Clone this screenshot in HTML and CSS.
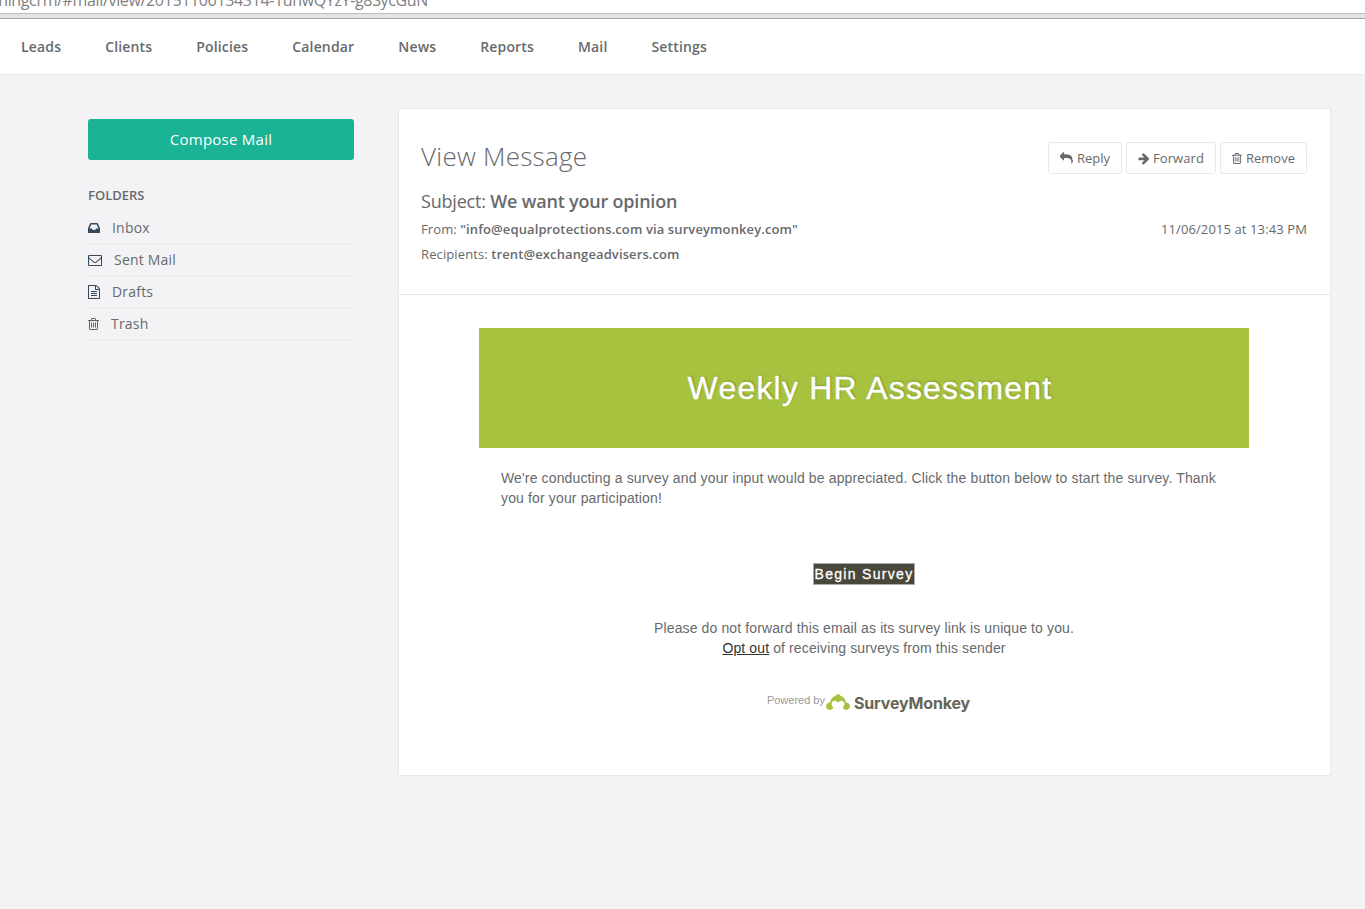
FILE: index.html
```html
<!DOCTYPE html>
<html lang="en">
<head>
<meta charset="utf-8">
<title>View Message</title>
<link rel="stylesheet" href="styles.css">
</head>
<body>
<svg class="sprite" width="0" height="0" aria-hidden="true">
  <symbol id="i-inbox" viewBox="128 0 1536 1792"><path d="M1151 960h316q-1-3-2.500-8t-2.500-8l-212-496h-708l-212 496q-1 2-2.500 8t-2.500 8h316l95 192h320zm513 30v482q0 26-19 45t-45 19h-1408q-26 0-45-19t-19-45v-482q0-62 25-123l238-552q10-25 36.500-42t52.500-17h832q26 0 52.500 17t36.500 42l238 552q25 61 25 123z"/></symbol>
  <symbol id="i-envelope" viewBox="0 0 1792 1792"><path d="M1664 1504v-768q-32 36-69 66-268 206-426 338-51 43-83 67t-86.500 48.500-102.500 24.500h-2q-48 0-102.500-24.500t-86.500-48.500-83-67q-158-132-426-338-37-30-69-66v768q0 13 9.500 22.500t22.500 9.500h1472q13 0 22.500-9.500t9.500-22.500zm0-1051v-24.500l-.5-13-3-12.500-5.500-9-9-7.500-14-2.500h-1472q-13 0-22.500 9.500t-9.500 22.500q0 168 147 284 193 152 401 317 6 5 35 29.500t46 37.500 44.500 31.500 50.500 27.500 43 9h2q20 0 43-9t50.500-27.500 44.500-31.500 46-37.500 35-29.500q208-165 401-317 54-43 100.500-115.500t46.500-131.500zm128-37v1088q0 66-47 113t-113 47h-1472q-66 0-113-47t-47-113v-1088q0-66 47-113t113-47h1472q66 0 113 47t47 113z"/></symbol>
  <symbol id="i-file" viewBox="128 0 1536 1792"><path d="M1596 380q28 28 48 76t20 88v1152q0 40-28 68t-68 28h-1344q-40 0-68-28t-28-68v-1600q0-40 28-68t68-28h896q40 0 88 20t76 48zm-444-244v376h376q-10-29-22-41l-313-313q-12-12-41-22zm384 1528v-1024h-416q-40 0-68-28t-28-68v-416h-768v1536h1280zm-1024-864q0-14 9-23t23-9h704q14 0 23 9t9 23v64q0 14-9 23t-23 9h-704q-14 0-23-9t-9-23v-64zm736 224q14 0 23 9t9 23v64q0 14-9 23t-23 9h-704q-14 0-23-9t-9-23v-64q0-14 9-23t23-9h704zm0 256q14 0 23 9t9 23v64q0 14-9 23t-23 9h-704q-14 0-23-9t-9-23v-64q0-14 9-23t23-9h704z"/></symbol>
  <symbol id="i-trash" viewBox="192 0 1408 1792"><path d="M704 736v576q0 14-9 23t-23 9h-64q-14 0-23-9t-9-23v-576q0-14 9-23t23-9h64q14 0 23 9t9 23zm256 0v576q0 14-9 23t-23 9h-64q-14 0-23-9t-9-23v-576q0-14 9-23t23-9h64q14 0 23 9t9 23zm256 0v576q0 14-9 23t-23 9h-64q-14 0-23-9t-9-23v-576q0-14 9-23t23-9h64q14 0 23 9t9 23zm128 724v-948h-896v948q0 22 7 40.500t14.500 27 10.500 8.500h832q3 0 10.500-8.500t14.500-27 7-40.500zm-672-1076h448l-48-117q-7-9-17-11h-317q-10 2-17 11zm928 32v64q0 14-9 23t-23 9h-96v948q0 83-47 143.500t-113 60.500h-832q-66 0-113-58.500t-47-141.500v-952h-96q-14 0-23-9t-9-23v-64q0-14 9-23t23-9h309l70-167q15-37 54-63t79-26h320q40 0 79 26t54 63l70 167h309q14 0 23 9t9 23z"/></symbol>
  <symbol id="i-reply" viewBox="0 0 1792 1792"><path d="M1792 1120q0 166-127 451-3 7-10.500 24t-13.500 30-13 22q-12 17-28 17-15 0-23.500-10t-8.500-25q0-9 2.500-26.500t2.500-23.500q5-68 5-123 0-112-19.500-200.500t-54-153.500-89-112-119.500-78.500-148-46.500-171-23-194.500-7h-224v256q0 26-19 45t-45 19-45-19l-512-512q-19-19-19-45t19-45l512-512q19-19 45-19t45 19 19 45v256h224q713 0 875 403 53 134 53 333z"/></symbol>
  <symbol id="i-arrow" viewBox="128 0 1536 1792"><path d="M1600 960q0 54-37 91l-651 651q-39 37-91 37-51 0-90-37l-75-75q-38-38-38-91t38-91l293-293h-704q-52 0-84.500-37.500t-32.500-90.500v-128q0-53 32.500-90.500t84.500-37.500h704l-293-294q-38-36-38-90t38-90l75-75q38-38 90-38 53 0 91 38l651 651q37 35 37 90z"/></symbol>
</svg>

<div class="addressbar"><span class="url">ningcrm/#mail/view/20151106134314-1uhwQYzY-g8SycGuN</span></div>
<div class="chrome-edge"></div>

<nav class="topnav">
  <a>Leads</a><a>Clients</a><a>Policies</a><a>Calendar</a><a>News</a><a>Reports</a><a>Mail</a><a>Settings</a>
</nav>

<div class="page">
  <aside class="sidebar">
    <button class="compose">Compose Mail</button>
    <h5 class="folders-title">FOLDERS</h5>
    <ul class="folders">
      <li><svg class="w12"><use href="#i-inbox"/></svg>Inbox</li>
      <li><svg class="w14"><use href="#i-envelope"/></svg>Sent Mail</li>
      <li><svg class="w12"><use href="#i-file"/></svg>Drafts</li>
      <li><svg class="w11 trash"><use href="#i-trash"/></svg>Trash</li>
    </ul>
  </aside>

  <main class="card">
    <header class="mail-head">
      <div class="title-row">
        <h2>View Message</h2>
        <div class="actions">
          <button class="btn reply"><svg><use href="#i-reply"/></svg>Reply</button>
          <button class="btn forward"><svg><use href="#i-arrow"/></svg>Forward</button>
          <button class="btn remove"><svg><use href="#i-trash"/></svg>Remove</button>
        </div>
      </div>
      <h3>Subject: <b>We want your opinion</b></h3>
      <div class="meta"><span>From: <b>"info@equalprotections.com via surveymonkey.com"</b></span><span>11/06/2015 at 13:43 PM</span></div>
      <div class="meta"><span>Recipients: <b>trent@exchangeadvisers.com</b></span></div>
    </header>

    <section class="mail-body">
      <div class="banner">Weekly HR Assessment</div>
      <p class="intro">We're conducting a survey and your input would be appreciated. Click the button below to start the survey. Thank you for your participation!</p>
      <a class="begin">Begin Survey</a>
      <p class="notice">Please do not forward this email as its survey link is unique to you.<br><a>Opt out</a> of receiving surveys from this sender</p>
      <div class="powered">
        <span class="by">Powered by</span>
        <svg class="monkey" viewBox="0 0 24 18"><path d="M4 9.500C4.600 6 6.900 3.300 10 2.700L9.600 1.600L11.200 2L12.200.6L13 1.600L14.600 1.400L14 2.700C17.100 3.300 19.400 6 20 9.500C22.300 9.600 24 11.300 24 13.300C24 15.400 22.400 16.900 20.400 16.900C18.700 16.900 17.300 15.900 16.800 14.400C18.200 12.800 18.700 11.200 18.200 9.700C17.600 8 15.800 7.300 14.200 7.900C13.200 8.200 12.500 8.900 12 9.800C11.500 8.900 10.800 8.200 9.800 7.900C8.200 7.300 6.400 8 5.800 9.700C5.300 11.200 5.800 12.800 7.200 14.400C6.700 15.900 5.300 16.900 3.600 16.900C1.600 16.900 0 15.400 0 13.300C0 11.300 1.700 9.600 4 9.500Z"/></svg>
        <span class="brand">SurveyMonkey</span>
      </div>
    </section>
  </main>
</div>
</body>
</html>
```
FILE: styles.css
```css
* { box-sizing: border-box; }
body {
  margin: 0;
  height: 909px;
  overflow: hidden;
  background: #f3f3f5;
  color: #676a6c;
  font-family: "Open Sans", "Noto Sans", sans-serif;
  font-size: 13px;
}
h2, h3, h5, p, ul { margin: 0; padding: 0; }
button { font-family: inherit; margin: 0; }
svg { display: block; fill: currentColor; flex: none; }
.sprite { position: absolute; }
b { font-weight: 600; }

.addressbar {
  display: flex;
  align-items: flex-end;
  justify-content: flex-end;
  height: 13px;
  width: 100%;
  padding: 0 937px 1px 0;
  background: #fff;
  overflow: hidden;
}
.url {
  font-size: 16px;
  line-height: 24px;
  letter-spacing: -0.35px;
  white-space: nowrap;
  color: #808080;
}
.chrome-edge {
  height: 6px;
  background: #e4e4e4;
  border-top: 1px solid #bdbdbd;
  border-bottom: 1px solid #a5a5a5;
}
.topnav {
  display: flex;
  gap: 44px;
  height: 56px;
  padding-left: 21px;
  background: #fff;
  border-bottom: 1px solid #e7eaec;
  font-size: 14px;
  font-weight: 600;
  line-height: 56px;
  letter-spacing: 0.16px;
}

.page {
  display: flex;
  align-items: flex-start;
  gap: 44px;
  padding: 33px 34px 0 88px;
}
.sidebar { width: 266px; padding-top: 11px; }
.compose {
  display: block;
  width: 266px;
  height: 41px;
  border: 0;
  padding: 0 0 2px;
  border-radius: 3px;
  background: #1ab394;
  color: #fff;
  font-size: 15px;
  letter-spacing: 0.25px;
}
.folders-title {
  margin-top: 26px;
  font-size: 13px;
  font-weight: 600;
  line-height: 18px;
}
.folders { margin-top: 8px; list-style: none; }
.folders li {
  display: flex;
  align-items: center;
  gap: 12px;
  height: 32px;
  border-bottom: 1px solid #e7eaec;
  font-size: 14px;
  letter-spacing: 0.2px;
}
.folders svg { height: 14px; color: #34495e; }
.w11 { width: 11px; }
.w12 { width: 12px; }
.w14 { width: 14px; }
.folders .trash { color: #6b625c; }

.card {
  width: 933px;
  height: 668px;
  background: #fff;
  border: 1px solid #e7eaec;
}
.mail-head {
  height: 186px;
  padding: 33px 23px 0 22px;
  border-bottom: 1px solid #e7eaec;
}
.title-row { display: flex; justify-content: space-between; height: 47px; }
h2 { font-size: 26px; font-weight: 300; line-height: 28px; letter-spacing: 0.25px; }
.actions { display: flex; gap: 4px; }
.btn {
  display: flex;
  align-items: center;
  justify-content: center;
  gap: 4px;
  height: 32px;
  padding: 0;
  border: 1px solid #e7eaec;
  border-radius: 3px;
  background: #fff;
  color: #676a6c;
  font-size: 13px;
}
.btn svg { height: 13px; width: 12px; }
.reply { width: 74px; }
.reply svg { width: 13px; }
.forward { width: 90px; gap: 3px; letter-spacing: 0.1px; }
.remove { width: 87px; }
.remove svg { width: 10px; }
h3 { font-size: 18px; font-weight: 400; line-height: 24px; letter-spacing: -0.2px; margin-bottom: 4px; }
.meta { display: flex; justify-content: space-between; line-height: 25px; letter-spacing: 0.11px; }

.mail-body {
  display: flex;
  flex-direction: column;
  align-items: center;
  padding: 33px 1px 0 0;
  font-family: "Liberation Sans", Arial, sans-serif;
}
.banner {
  width: 770px;
  height: 120px;
  padding-left: 12px;
  background: #a7c23e;
  color: #fff;
  font-size: 32px;
  letter-spacing: 1.2px;
  line-height: 120px;
  text-align: center;
  text-shadow: 1px -1px 2px #7d9130;
  -webkit-text-stroke: 0.4px #fff;
}
.intro {
  width: 726px;
  margin-top: 20px;
  font-size: 14px;
  line-height: 20px;
  letter-spacing: 0.14px;
}
.begin {
  margin-top: 55px;
  height: 22px;
  width: 102px;
  border: 1px solid #aaa;
  background: #48473a;
  color: #fff;
  font-size: 14px;
  letter-spacing: 1.3px;
  line-height: 20px;
  text-align: center;
  white-space: nowrap;
  -webkit-text-stroke: 0.3px #fff;
}
.notice {
  margin-top: 33px;
  font-size: 14px;
  line-height: 20px;
  text-align: center;
  letter-spacing: 0.12px;
}
.notice a { color: #333; text-decoration: underline; }
.powered {
  display: flex;
  align-items: center;
  height: 24px;
  margin-top: 33px;
  padding-left: 9px;
}
.by { font-size: 11px; color: #999; padding-bottom: 6px; }
.monkey { width: 24px; height: 18px; color: #a7c23e; margin: 0 0 3px 1px; }
.brand {
  margin-left: 4px;
  font-family: Inter, Roboto, sans-serif;
  font-size: 16px;
  font-weight: 700;
  letter-spacing: -0.15px;
  color: #666653;
}
```
